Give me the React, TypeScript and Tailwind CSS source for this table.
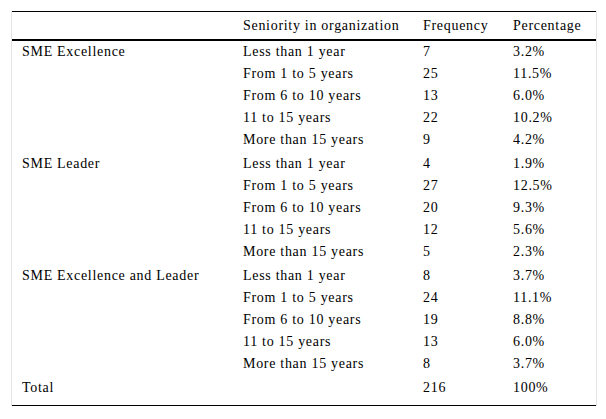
const groups = [
  {
    name: "SME Excellence",
    rows: [
      ["Less than 1 year", "7", "3.2%"],
      ["From 1 to 5 years", "25", "11.5%"],
      ["From 6 to 10 years", "13", "6.0%"],
      ["11 to 15 years", "22", "10.2%"],
      ["More than 15 years", "9", "4.2%"],
    ],
  },
  {
    name: "SME Leader",
    rows: [
      ["Less than 1 year", "4", "1.9%"],
      ["From 1 to 5 years", "27", "12.5%"],
      ["From 6 to 10 years", "20", "9.3%"],
      ["11 to 15 years", "12", "5.6%"],
      ["More than 15 years", "5", "2.3%"],
    ],
  },
  {
    name: "SME Excellence and Leader",
    rows: [
      ["Less than 1 year", "8", "3.7%"],
      ["From 1 to 5 years", "24", "11.1%"],
      ["From 6 to 10 years", "19", "8.8%"],
      ["11 to 15 years", "13", "6.0%"],
      ["More than 15 years", "8", "3.7%"],
    ],
  },
];

const cols = "grid grid-cols-[221px_180px_90px_1fr]";
const cell = "pl-[10px] leading-[22px] whitespace-nowrap";

export default function App() {
  return (
    <div className="min-h-screen bg-white pt-[11px] pl-[11px] font-[Liberation_Serif,serif] text-[14px] tracking-[0.7px] text-black">
      <div className="w-[586px] border-r border-l border-[#e4e4e4]">
        <div className="border-t border-black">
          <div className={`${cols} h-[29px] items-center border-b-[2px] border-black`}>
            <div className={cell}></div>
            <div className={cell}>Seniority in organization</div>
            <div className={cell}>Frequency</div>
            <div className={cell}>Percentage</div>
          </div>

          {groups.map((g, gi) =>
            g.rows.map((r, ri) => (
              <div
                key={`${gi}-${ri}`}
                className={`${cols} ${ri === 0 && gi > 0 ? "pt-[2px]" : ""}`}
              >
                <div className={cell}>{ri === 0 ? g.name : ""}</div>
                <div className={cell}>{r[0]}</div>
                <div className={cell}>{r[1]}</div>
                <div className={cell}>{r[2]}</div>
              </div>
            ))
          )}

          <div className={`${cols} pt-[2px] pb-[6px] border-b border-black`}>
            <div className={cell}>Total</div>
            <div className={cell}></div>
            <div className={cell}>216</div>
            <div className={cell}>100%</div>
          </div>
        </div>
      </div>
    </div>
  );
}
